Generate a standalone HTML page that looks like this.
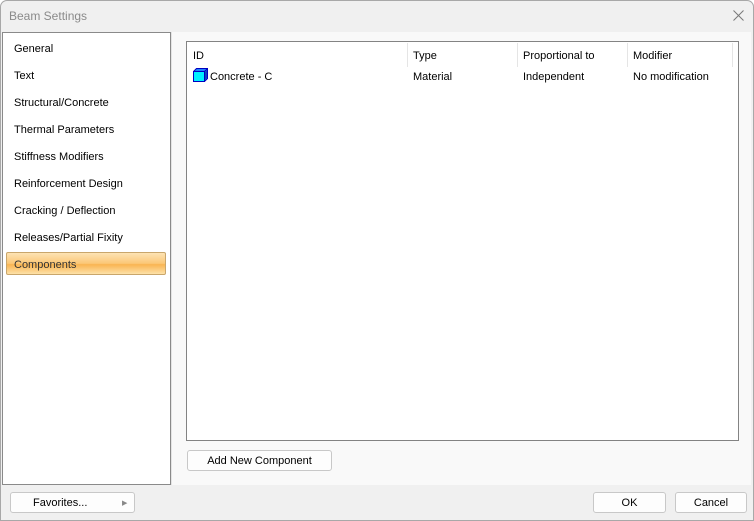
<!DOCTYPE html>
<html><head><style>
*{margin:0;padding:0;box-sizing:border-box}
body{width:754px;height:521px;background:#fff;font-family:"Liberation Sans",sans-serif;font-size:11px;color:#000;position:relative;overflow:hidden}
.win{position:absolute;left:0;top:0;width:754px;height:521px;background:#f0f0f0;box-shadow:inset 0 0 0 1px #a8a8a8;border-radius:7px 7px 0 0}
.title{position:absolute;left:9px;top:9px;font-size:12px;color:#8a8a8a}
.left{position:absolute;left:2px;top:32px;width:169px;height:453px;background:#fff;border:1px solid #8a8a8a}
.item{position:absolute;left:11px;font-size:11px}
.sel{position:absolute;left:3px;top:219px;width:160px;height:23px;border:1px solid #c9a66b;border-radius:2px;background:linear-gradient(#fde3b4,#fbc776 50%,#f9b451 55%,#fde1a8)}
.right{position:absolute;left:171px;top:32px;width:580px;height:453px;background:#f9f9f9;border-left:1px solid #e4e4e4}
.list{position:absolute;left:186px;top:41px;width:553px;height:400px;background:#fff;border:1px solid #838383}
.h{position:absolute;top:8px}
.sep{position:absolute;top:1px;width:1px;height:24px;background:#e5e5e5}
.btn{position:absolute;height:21px;background:#fdfdfd;border:1px solid #c8c8c8;border-radius:3px;text-align:center;line-height:21px;font-size:11px}
</style></head><body>
<div class="win">
<div class="title">Beam Settings</div>
<svg style="position:absolute;left:733px;top:10px" width="11" height="11" viewBox="0 0 11 11"><path d="M0.5 0.5 L10.5 10.5 M10.5 0.5 L0.5 10.5" stroke="#777" stroke-width="1"/></svg>
<div class="right"></div>
<div class="left">
<div class="item" style="top:10px">General</div>
<div class="item" style="top:37px">Text</div>
<div class="item" style="top:64px">Structural/Concrete</div>
<div class="item" style="top:91px">Thermal Parameters</div>
<div class="item" style="top:118px">Stiffness Modifiers</div>
<div class="item" style="top:145px">Reinforcement Design</div>
<div class="item" style="top:172px">Cracking / Deflection</div>
<div class="item" style="top:199px">Releases/Partial Fixity</div>
<div class="sel"></div>
<div class="item" style="top:226px;color:#333">Components</div>
</div>
<div class="list">
<div class="h" style="left:6px">ID</div>
<div class="sep" style="left:220px"></div>
<div class="h" style="left:226px">Type</div>
<div class="sep" style="left:330px"></div>
<div class="h" style="left:336px">Proportional to</div>
<div class="sep" style="left:440px"></div>
<div class="h" style="left:446px">Modifier</div>
<div class="sep" style="left:545px"></div>
<svg style="position:absolute;left:6px;top:26px" width="16" height="14" viewBox="0 0 16 14"><path d="M0.5 3.5 L3.5 0.5 H14.5 V10.5 L11.5 13.5 Z" fill="#2080ff" stroke="#0000c0"/><rect x="0.5" y="3.5" width="11" height="10" fill="#00f0ff" stroke="#0000c0"/><path d="M11.5 3.5 L14.5 0.5" stroke="#0000c0"/><path d="M12 4 L14 2 V10 L12 12Z" fill="#1040c0"/></svg>
<div class="h" style="left:23px;top:29px">Concrete - C</div>
<div class="h" style="left:226px;top:29px">Material</div>
<div class="h" style="left:336px;top:29px">Independent</div>
<div class="h" style="left:446px;top:29px">No modification</div>
</div>
<div class="btn" style="left:187px;top:450px;width:145px">Add New Component</div>
<div class="btn" style="left:10px;top:492px;width:125px;text-align:left;padding-left:22px">Favorites...<span style="position:absolute;left:111px;top:0;font-size:7px;color:#888">▶</span></div>
<div class="btn" style="left:593px;top:492px;width:73px">OK</div>
<div class="btn" style="left:675px;top:492px;width:72px">Cancel</div>
</div>
</body></html>
